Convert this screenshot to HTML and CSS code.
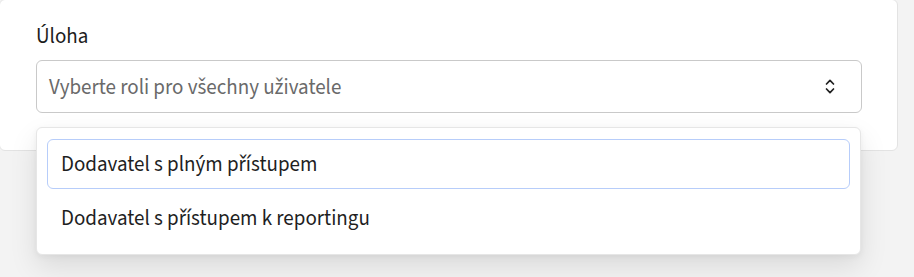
FILE: index.html
```html
<!DOCTYPE html>
<html lang="cs">
<head>
<meta charset="utf-8">
<link rel="stylesheet" href="styles.css">
</head>
<body>
<div class="card">
  <div class="field">
    <div class="label">Úloha</div>
    <div class="select">
      <span class="placeholder">Vyberte roli pro všechny uživatele</span>
      <svg class="chevrons" width="10" height="17" viewBox="0 0 10 17" fill="none" stroke="#222" stroke-width="1.7" stroke-linecap="round" stroke-linejoin="round">
        <path d="M1.5 6 L5 2.3 L8.5 6"/>
        <path d="M1.5 11 L5 14.7 L8.5 11"/>
      </svg>
    </div>
  </div>
</div>
<div class="menu">
  <div class="option active">Dodavatel s plným přístupem</div>
  <div class="option">Dodavatel s přístupem k reportingu</div>
</div>
</body>
</html>
```
FILE: styles.css
```css
html, body {
  margin: 0;
  padding: 0;
}
body {
  background: #f3f3f3;
  font-family: "Source Sans Pro", "Source Sans 3", Lato, "Liberation Sans", sans-serif;
  color: #1f1f1f;
  width: 914px;
  height: 277px;
  overflow: hidden;
  position: relative;
}
.card {
  margin-left: -1px;
  margin-top: -1px;
  width: 899px;
  height: 152px;
  background: #fff;
  border: 1px solid #e3e3e3;
  border-radius: 6px;
  padding: 23px 36px 0 36px;
  box-sizing: border-box;
}
.label {
  font-size: 21px;
  line-height: 26px;
  color: #1c1c1c;
}
.select {
  margin-top: 11px;
  width: 826px;
  height: 53px;
  border: 1px solid #c9c9c9;
  border-radius: 6px;
  box-sizing: border-box;
  display: flex;
  align-items: center;
  justify-content: space-between;
  padding: 0 26px 0 12px;
}
.placeholder {
  font-size: 21px;
  color: #6a6a6a;
}
.chevrons {
  display: block;
}
.menu {
  position: absolute;
  left: 36px;
  top: 127px;
  width: 825px;
  height: 128px;
  box-sizing: border-box;
  background: #fff;
  border: 1px solid #e6e6e6;
  border-radius: 6px;
  box-shadow: 0 12px 28px rgba(0, 0, 0, 0.10), 0 2px 6px rgba(0, 0, 0, 0.05);
  padding: 11px 10px;
  display: flex;
  flex-direction: column;
}
.option {
  height: 50px;
  box-sizing: border-box;
  display: flex;
  align-items: center;
  padding: 0 13px;
  font-size: 21px;
  color: #1f1f1f;
  border: 1px solid transparent;
  border-radius: 6px;
}
.option.active {
  border-color: #b7cdfa;
}
.option + .option {
  margin-top: 4px;
}
```
